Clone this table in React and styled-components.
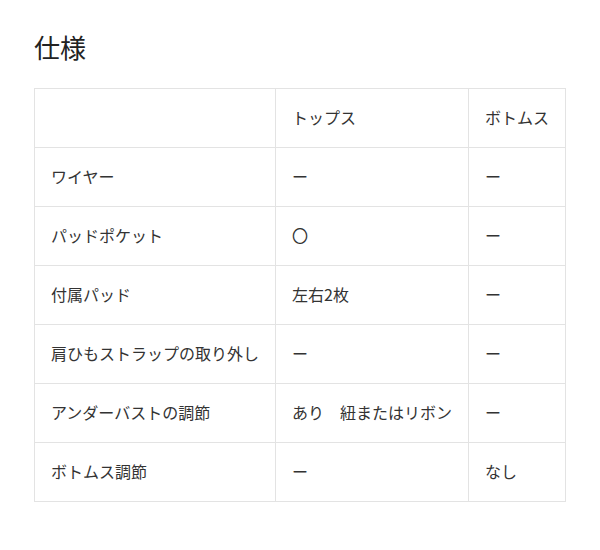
import React from 'react'
import styled, { createGlobalStyle } from 'styled-components'

const GlobalStyle = createGlobalStyle`
  body {
    margin: 0;
    background: #fff;
    font-family: 'Noto Sans CJK JP', 'Noto Sans', sans-serif;
    color: #333;
  }
`

const Page = styled.div`
  padding: 28px 34px;
`

const Title = styled.h2`
  margin: 0 0 22px 0;
  font-size: 26px;
  font-weight: 400;
  line-height: 38px;
  color: #222;
`

const Table = styled.table`
  width: 532px;
  border-collapse: collapse;
  font-size: 16px;
`

const Cell = styled.td`
  height: 55px;
  padding: 0 16px 3px;
  border: 1px solid #e3e3e3;
  border-left-color: ${p => (p.divided ? '#c8c8c8' : '#e3e3e3')};
  text-align: left;
  vertical-align: middle;
  white-space: nowrap;
  font-weight: 400;
  line-height: 22px;
`

const rows = [
  ['ワイヤー', 'ー', 'ー'],
  ['パッドポケット', '〇', 'ー'],
  ['付属パッド', '左右2枚', 'ー'],
  ['肩ひもストラップの取り外し', 'ー', 'ー'],
  ['アンダーバストの調節', 'あり　紐またはリボン', 'ー'],
  ['ボトムス調節', 'ー', 'なし'],
]

const App = () => (
  <Page>
    <GlobalStyle />
    <Title>仕様</Title>
    <Table>
      <colgroup>
        <col style={{ width: 241 }} />
        <col style={{ width: 193 }} />
        <col style={{ width: 98 }} />
      </colgroup>
      <thead>
        <tr>
          <Cell as="th" />
          <Cell as="th" divided>トップス</Cell>
          <Cell as="th">ボトムス</Cell>
        </tr>
      </thead>
      <tbody>
        {rows.map(([label, top, bottom]) => (
          <tr key={label}>
            <Cell>{label}</Cell>
            <Cell divided>{top}</Cell>
            <Cell>{bottom}</Cell>
          </tr>
        ))}
      </tbody>
    </Table>
  </Page>
)

export default App
